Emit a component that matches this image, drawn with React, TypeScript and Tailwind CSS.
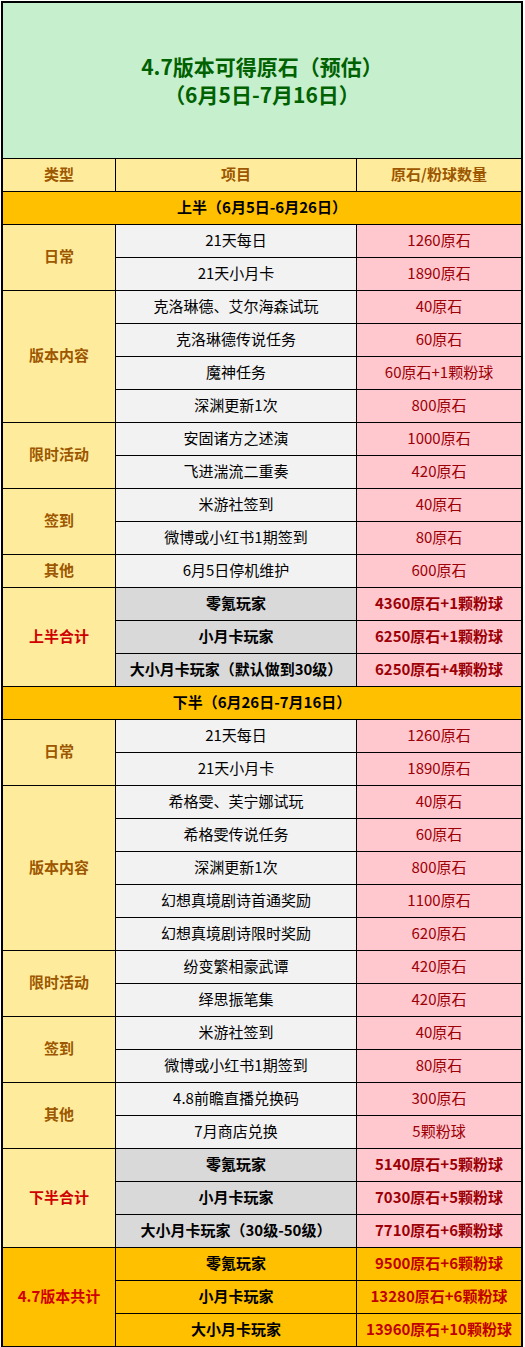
import React from "react";

type Item = { name: string; value: string };
type Group = { label: string; items: Item[] };

const firstHalf: Group[] = [
  {
    label: "日常",
    items: [
      { name: "21天每日", value: "1260原石" },
      { name: "21天小月卡", value: "1890原石" },
    ],
  },
  {
    label: "版本内容",
    items: [
      { name: "克洛琳德、艾尔海森试玩", value: "40原石" },
      { name: "克洛琳德传说任务", value: "60原石" },
      { name: "魔神任务", value: "60原石+1颗粉球" },
      { name: "深渊更新1次", value: "800原石" },
    ],
  },
  {
    label: "限时活动",
    items: [
      { name: "安固诸方之述演", value: "1000原石" },
      { name: "飞进湍流二重奏", value: "420原石" },
    ],
  },
  {
    label: "签到",
    items: [
      { name: "米游社签到", value: "40原石" },
      { name: "微博或小红书1期签到", value: "80原石" },
    ],
  },
  {
    label: "其他",
    items: [{ name: "6月5日停机维护", value: "600原石" }],
  },
];

const secondHalf: Group[] = [
  {
    label: "日常",
    items: [
      { name: "21天每日", value: "1260原石" },
      { name: "21天小月卡", value: "1890原石" },
    ],
  },
  {
    label: "版本内容",
    items: [
      { name: "希格雯、芙宁娜试玩", value: "40原石" },
      { name: "希格雯传说任务", value: "60原石" },
      { name: "深渊更新1次", value: "800原石" },
      { name: "幻想真境剧诗首通奖励", value: "1100原石" },
      { name: "幻想真境剧诗限时奖励", value: "620原石" },
    ],
  },
  {
    label: "限时活动",
    items: [
      { name: "纷变繁相豪武谭", value: "420原石" },
      { name: "绎思振笔集", value: "420原石" },
    ],
  },
  {
    label: "签到",
    items: [
      { name: "米游社签到", value: "40原石" },
      { name: "微博或小红书1期签到", value: "80原石" },
    ],
  },
  {
    label: "其他",
    items: [
      { name: "4.8前瞻直播兑换码", value: "300原石" },
      { name: "7月商店兑换", value: "5颗粉球" },
    ],
  },
];

const spanRows: Record<number, string> = {
  1: "row-span-1",
  2: "row-span-2",
  3: "row-span-3",
  4: "row-span-4",
  5: "row-span-5",
};

// pb-1 nudges the glyphs up a bit, Noto CJK sits low in the box
const cell = "flex items-center justify-center pb-1 text-center";

function Section({ title }: { title: string }) {
  return (
    <div className={`${cell} col-span-3 bg-[#ffc000] font-bold text-black`}>
      {title}
    </div>
  );
}

function Groups({ groups }: { groups: Group[] }) {
  return (
    <>
      {groups.map((g) => (
        <React.Fragment key={g.label}>
          <div
            className={`${cell} ${spanRows[g.items.length]} bg-[#ffeb9c] font-bold text-[#9c5700]`}
          >
            {g.label}
          </div>
          {g.items.map((it, i) => (
            <React.Fragment key={i}>
              <div className={`${cell} col-start-2 bg-[#f2f2f2] text-black`}>
                {it.name}
              </div>
              <div className={`${cell} bg-[#ffc7ce] text-[#9c0006]`}>
                {it.value}
              </div>
            </React.Fragment>
          ))}
        </React.Fragment>
      ))}
    </>
  );
}

function Totals({
  label,
  rows,
  orange,
}: {
  label: string;
  rows: Item[];
  orange?: boolean;
}) {
  return (
    <>
      <div
        className={`${cell} row-span-3 font-bold text-[#d00000] ${
          orange ? "bg-[#ffc000]" : "bg-[#ffeb9c]"
        }`}
      >
        {label}
      </div>
      {rows.map((r, i) => (
        <React.Fragment key={i}>
          <div
            className={`${cell} col-start-2 font-bold text-black ${
              orange ? "bg-[#ffc000]" : "bg-[#d9d9d9]"
            }`}
          >
            {r.name}
          </div>
          <div
            className={`${cell} font-bold ${
              orange ? "bg-[#ffc000] text-[#c00000]" : "bg-[#ffc7ce] text-[#9c0006]"
            }`}
          >
            {r.value}
          </div>
        </React.Fragment>
      ))}
    </>
  );
}

export default function App() {
  return (
    <div
      className="bg-white pl-px pt-px"
      style={{ fontFamily: '"Noto Sans CJK SC", "Noto Sans", sans-serif' }}
    >
      <div className="w-[522px] border-2 border-black">
        <div className="grid grid-cols-[112px_240px_164px] grid-rows-[155px] auto-rows-[32px] gap-px bg-black text-[15px] leading-none">
          <div className="col-span-3 flex flex-col items-center justify-center bg-[#c6efce] pb-0.5 text-center text-[21px] font-bold leading-[28px] text-[#006100]">
            <div>4.7版本可得原石（预估）</div>
            <div>（6月5日-7月16日）</div>
          </div>

          <div className={`${cell} bg-[#ffeb9c] font-bold text-[#9c5700]`}>类型</div>
          <div className={`${cell} bg-[#ffeb9c] font-bold text-[#9c5700]`}>项目</div>
          <div className={`${cell} bg-[#ffeb9c] font-bold text-[#9c5700]`}>原石/粉球数量</div>

          <Section title="上半（6月5日-6月26日）" />
          <Groups groups={firstHalf} />
          <Totals
            label="上半合计"
            rows={[
              { name: "零氪玩家", value: "4360原石+1颗粉球" },
              { name: "小月卡玩家", value: "6250原石+1颗粉球" },
              { name: "大小月卡玩家（默认做到30级）", value: "6250原石+4颗粉球" },
            ]}
          />

          <Section title="下半（6月26日-7月16日）" />
          <Groups groups={secondHalf} />
          <Totals
            label="下半合计"
            rows={[
              { name: "零氪玩家", value: "5140原石+5颗粉球" },
              { name: "小月卡玩家", value: "7030原石+5颗粉球" },
              { name: "大小月卡玩家（30级-50级）", value: "7710原石+6颗粉球" },
            ]}
          />

          <Totals
            label="4.7版本共计"
            orange
            rows={[
              { name: "零氪玩家", value: "9500原石+6颗粉球" },
              { name: "小月卡玩家", value: "13280原石+6颗粉球" },
              { name: "大小月卡玩家", value: "13960原石+10颗粉球" },
            ]}
          />
        </div>
      </div>
    </div>
  );
}
